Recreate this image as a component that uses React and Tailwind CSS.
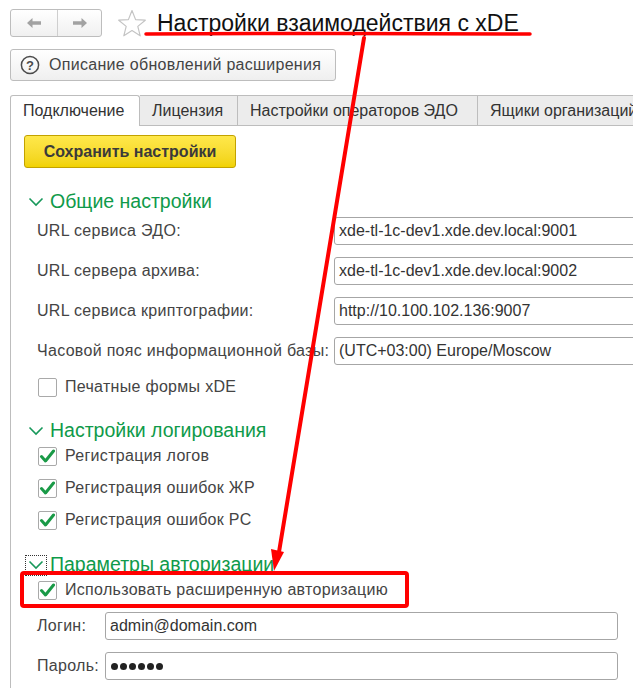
import React from 'react';

const green = 'text-[#0f9a4a]';

const Chevron = () => (
  <svg width="16" height="10" viewBox="0 0 16 10" className="shrink-0">
    <path d="M1.5 1.5 L8 8 L14.5 1.5" fill="none" stroke="#17985a" strokeWidth="1.6" />
  </svg>
);

const CheckBox = ({ checked }) => (
  <div className="w-[19px] h-[19px] border border-[#a9a9a9] rounded-[2px] bg-white flex items-center justify-center shrink-0">
    {checked && (
      <svg width="17" height="15" viewBox="0 0 17 15">
        <path d="M2.5 7.5 L6.5 12 L14.5 2" fill="none" stroke="#1a9a47" strokeWidth="3" strokeLinecap="round" strokeLinejoin="round" />
      </svg>
    )}
  </div>
);

const SectionHeader = ({ title, focused, className = '' }) => (
  <div className={`flex items-center h-[24px] ${className}`}>
    <div className={`ml-[2px] w-[20px] h-[19px] flex items-center justify-center ${focused ? 'outline-1 outline-dotted outline-[#333]' : ''}`}>
      <Chevron />
    </div>
    <span className={`ml-[4px] text-[19.5px] leading-none ${green}`}>{title}</span>
  </div>
);

const Field = ({ label, value, className = '' }) => (
  <div className={`flex items-center h-[28px] ${className}`}>
    <span className="w-[310px] shrink-0 pl-[13px] text-[16px] tracking-[0.3px] text-[#444] whitespace-nowrap">{label}</span>
    <div className="w-[320px] shrink-0 h-[28px] border border-[#a6a6a6] rounded-[3px] flex items-center px-[4px] text-[16px] text-[#333] whitespace-nowrap">
      {value}
    </div>
  </div>
);

const CheckRow = ({ label, checked, className = '' }) => (
  <div className={`flex items-center h-[20px] pl-[14px] ${className}`}>
    <CheckBox checked={checked} />
    <span className="ml-[8px] text-[16px] tracking-[0.3px] text-[#444] whitespace-nowrap">{label}</span>
  </div>
);

const AuthField = ({ label, children, className = '' }) => (
  <div className={`flex items-center h-[28px] ${className}`}>
    <span className="w-[81px] shrink-0 pl-[13px] text-[16px] tracking-[0.3px] text-[#444]">{label}</span>
    <div className="w-[513px] h-[28px] border border-[#a6a6a6] rounded-[3px] flex items-center px-[4px] text-[16px] text-[#333]">
      {children}
    </div>
  </div>
);

export default function App() {
  const tabs = [
    { title: 'Лицензия', w: 'w-[98px]' },
    { title: 'Настройки операторов ЭДО', w: 'w-[240px]' },
    { title: 'Ящики организаций', w: 'w-[180px]' },
  ];

  return (
    <div className="relative w-[633px] h-[688px] overflow-hidden bg-white font-['Liberation_Sans',Arial,sans-serif] text-[#404040]">
      {/* title bar */}
      <div className="flex items-center pt-[9px] pl-[10px] h-[37px]">
        <div className="flex w-[92px] h-[28px] border border-[#bdbdbd] rounded-[3px] bg-gradient-to-b from-white to-[#f0f0f0]">
          <div className="w-[47px] flex items-center justify-center border-r border-[#cfcfcf]">
            <svg width="16" height="12" viewBox="0 0 16 12">
              <path d="M1 6 L6.5 1 V4.3 H15 V7.7 H6.5 V11 Z" fill="#a2a2a2" />
            </svg>
          </div>
          <div className="flex-1 flex items-center justify-center">
            <svg width="16" height="12" viewBox="0 0 16 12">
              <path d="M15 6 L9.5 1 V4.3 H1 V7.7 H9.5 V11 Z" fill="#a2a2a2" />
            </svg>
          </div>
        </div>
        <svg width="30" height="29" viewBox="0 0 30 29" className="ml-[15px]">
          <path
            d="M15 1.5 L18.6 10.6 L28.3 11.2 L20.8 17.4 L23.2 26.8 L15 21.6 L6.8 26.8 L9.2 17.4 L1.7 11.2 L11.4 10.6 Z"
            fill="none"
            stroke="#c4c4c4"
            strokeWidth="1.2"
            strokeLinejoin="round"
          />
        </svg>
        <h1 className="ml-[10px] text-[23px] text-[#111] leading-none whitespace-nowrap">Настройки взаимодействия с xDE</h1>
      </div>

      {/* description button */}
      <div className="mt-[12px] ml-[10px] w-[326px] h-[32px] border border-[#bdbdbd] rounded-[3px] bg-gradient-to-b from-white to-[#efefef] flex items-center pl-[9px]">
        <svg width="20" height="20" viewBox="0 0 20 20">
          <circle cx="10" cy="10" r="8.6" fill="none" stroke="#4a4a4a" strokeWidth="1.5" />
          <text x="10" y="15" textAnchor="middle" fontSize="13" fontWeight="bold" fill="#4a4a4a" fontFamily="Liberation Sans, Arial, sans-serif">?</text>
        </svg>
        <span className="ml-[9px] text-[16px] tracking-[0.3px] text-[#444] whitespace-nowrap">Описание обновлений расширения</span>
      </div>

      {/* tabs */}
      <div className="mt-[14px] ml-[10px] flex h-[31px]">
        <div className="w-[130px] shrink-0 border border-b-0 border-[#bdbdbd] rounded-t-[3px] bg-white flex items-center pl-[12px] text-[16px] text-[#333]">
          Подключение
        </div>
        {tabs.map((t) => (
          <div
            key={t.title}
            className={`${t.w} shrink-0 border border-l-0 border-[#bdbdbd] bg-[#ececec] flex items-center pl-[12px] text-[16px] text-[#333] whitespace-nowrap`}
          >
            {t.title}
          </div>
        ))}
      </div>

      {/* tab page */}
      <div className="ml-[10px] border-l border-[#bdbdbd] pl-[13px] pt-[9px] h-[600px]">
        <div className="w-[212px] h-[33px] border border-[#c2a200] rounded-[3px] bg-gradient-to-b from-[#ffe84a] to-[#f1d200] flex items-center justify-center text-[16px] font-bold text-[#3a3a3a]">
          Сохранить настройки
        </div>

        <SectionHeader title="Общие настройки" className="mt-[22px]" />
        <Field label="URL сервиса ЭДО:" value="xde-tl-1c-dev1.xde.dev.local:9001" className="mt-[3px]" />
        <Field label="URL сервера архива:" value="xde-tl-1c-dev1.xde.dev.local:9002" className="mt-[12px]" />
        <Field label="URL сервиса криптографии:" value="http://10.100.102.136:9007" className="mt-[12px]" />
        <Field label="Часовой пояс информационной базы:" value="(UTC+03:00) Europe/Moscow" className="mt-[12px]" />
        <CheckRow label="Печатные формы xDE" className="mt-[12px]" />

        <SectionHeader title="Настройки логирования" className="mt-[22px]" />
        <CheckRow label="Регистрация логов" checked className="mt-[3px]" />
        <CheckRow label="Регистрация ошибок ЖР" checked className="mt-[12px]" />
        <CheckRow label="Регистрация ошибок РС" checked className="mt-[12px]" />

        <SectionHeader title="Параметры авторизации" focused className="mt-[23px]" />
        <CheckRow label="Использовать расширенную авторизацию" checked className="mt-[3px]" />
        <AuthField label="Логин:" className="mt-[12px]">admin@domain.com</AuthField>
        <AuthField label="Пароль:" className="mt-[12px]">
          <div className="flex gap-[2px] ml-[1px]">
            {[0, 1, 2, 3, 4, 5].map((i) => (
              <span key={i} className="w-[7px] h-[7px] rounded-full bg-[#222]" />
            ))}
          </div>
        </AuthField>
      </div>

      {/* red markup drawn over the form */}
      <svg className="absolute inset-0 pointer-events-none" width="633" height="688" viewBox="0 0 633 688">
        <path d="M146 34 Q340 33 530 34" fill="none" stroke="#ff0000" strokeWidth="3.5" strokeLinecap="round" />
        <path d="M364 38 L279 552" fill="none" stroke="#ff0000" strokeWidth="4" strokeLinecap="round" />
        <path d="M271 549 L284 552 L274 571 Z" fill="#ff0000" />
        <rect x="22" y="573" width="385" height="33" rx="2" fill="none" stroke="#ff0000" strokeWidth="4" />
      </svg>
    </div>
  );
}
